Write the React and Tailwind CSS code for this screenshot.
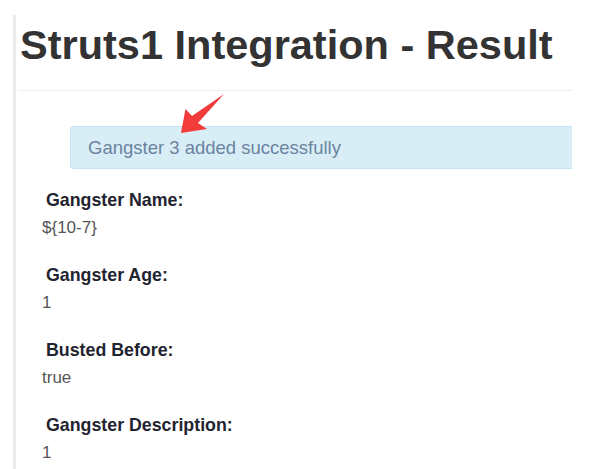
export default function App() {
    const fields = [
        { label: "Gangster Name:", value: "${10-7}" },
        { label: "Gangster Age:", value: "1" },
        { label: "Busted Before:", value: "true" },
        { label: "Gangster Description:", value: "1" },
    ];

    return (
        <div className="relative w-[607px] h-[469px] overflow-hidden bg-white font-['Liberation_Sans',Arial,sans-serif]">
            <div className="ml-[13px] mt-[15px] pt-[7px] w-[559px] h-[460px] border-l-[3px] border-[#ebebeb]">
                <h1 className="ml-[2px] pl-[2px] pb-[23px] border-b border-[#eeeeee] text-[41.5px] leading-[45px] font-bold text-[#333333] whitespace-nowrap">
                    Struts1 Integration - Result
                </h1>

                <div className="ml-[54px] mt-[35px] h-[43px] flex items-center pl-[17px] rounded-l-[4px] border border-r-0 border-[#c4e3f3] bg-[#d9edf7] text-[18.5px] text-[#6a84a0]">
                    Gangster 3 added successfully
                </div>

                <div className="mt-[18px] pl-[26px] flex flex-col gap-[21px]">
                    {fields.map((f) => (
                        <div key={f.label} className="flex flex-col">
                            <span className="pl-[4px] text-[17.8px] leading-[27px] font-bold text-[#1f2430]">{f.label}</span>
                            <span className="text-[17px] leading-[27px] text-[#555555]">{f.value}</span>
                        </div>
                    ))}
                </div>
            </div>

            <svg className="absolute left-0 top-0 pointer-events-none" width="607" height="469" viewBox="0 0 607 469">
                <polygon
                    points="181,133 185.5,109 192,116 224,94 198,123 207,129"
                    fill="#f23b3b"
                />
            </svg>
        </div>
    );
}
